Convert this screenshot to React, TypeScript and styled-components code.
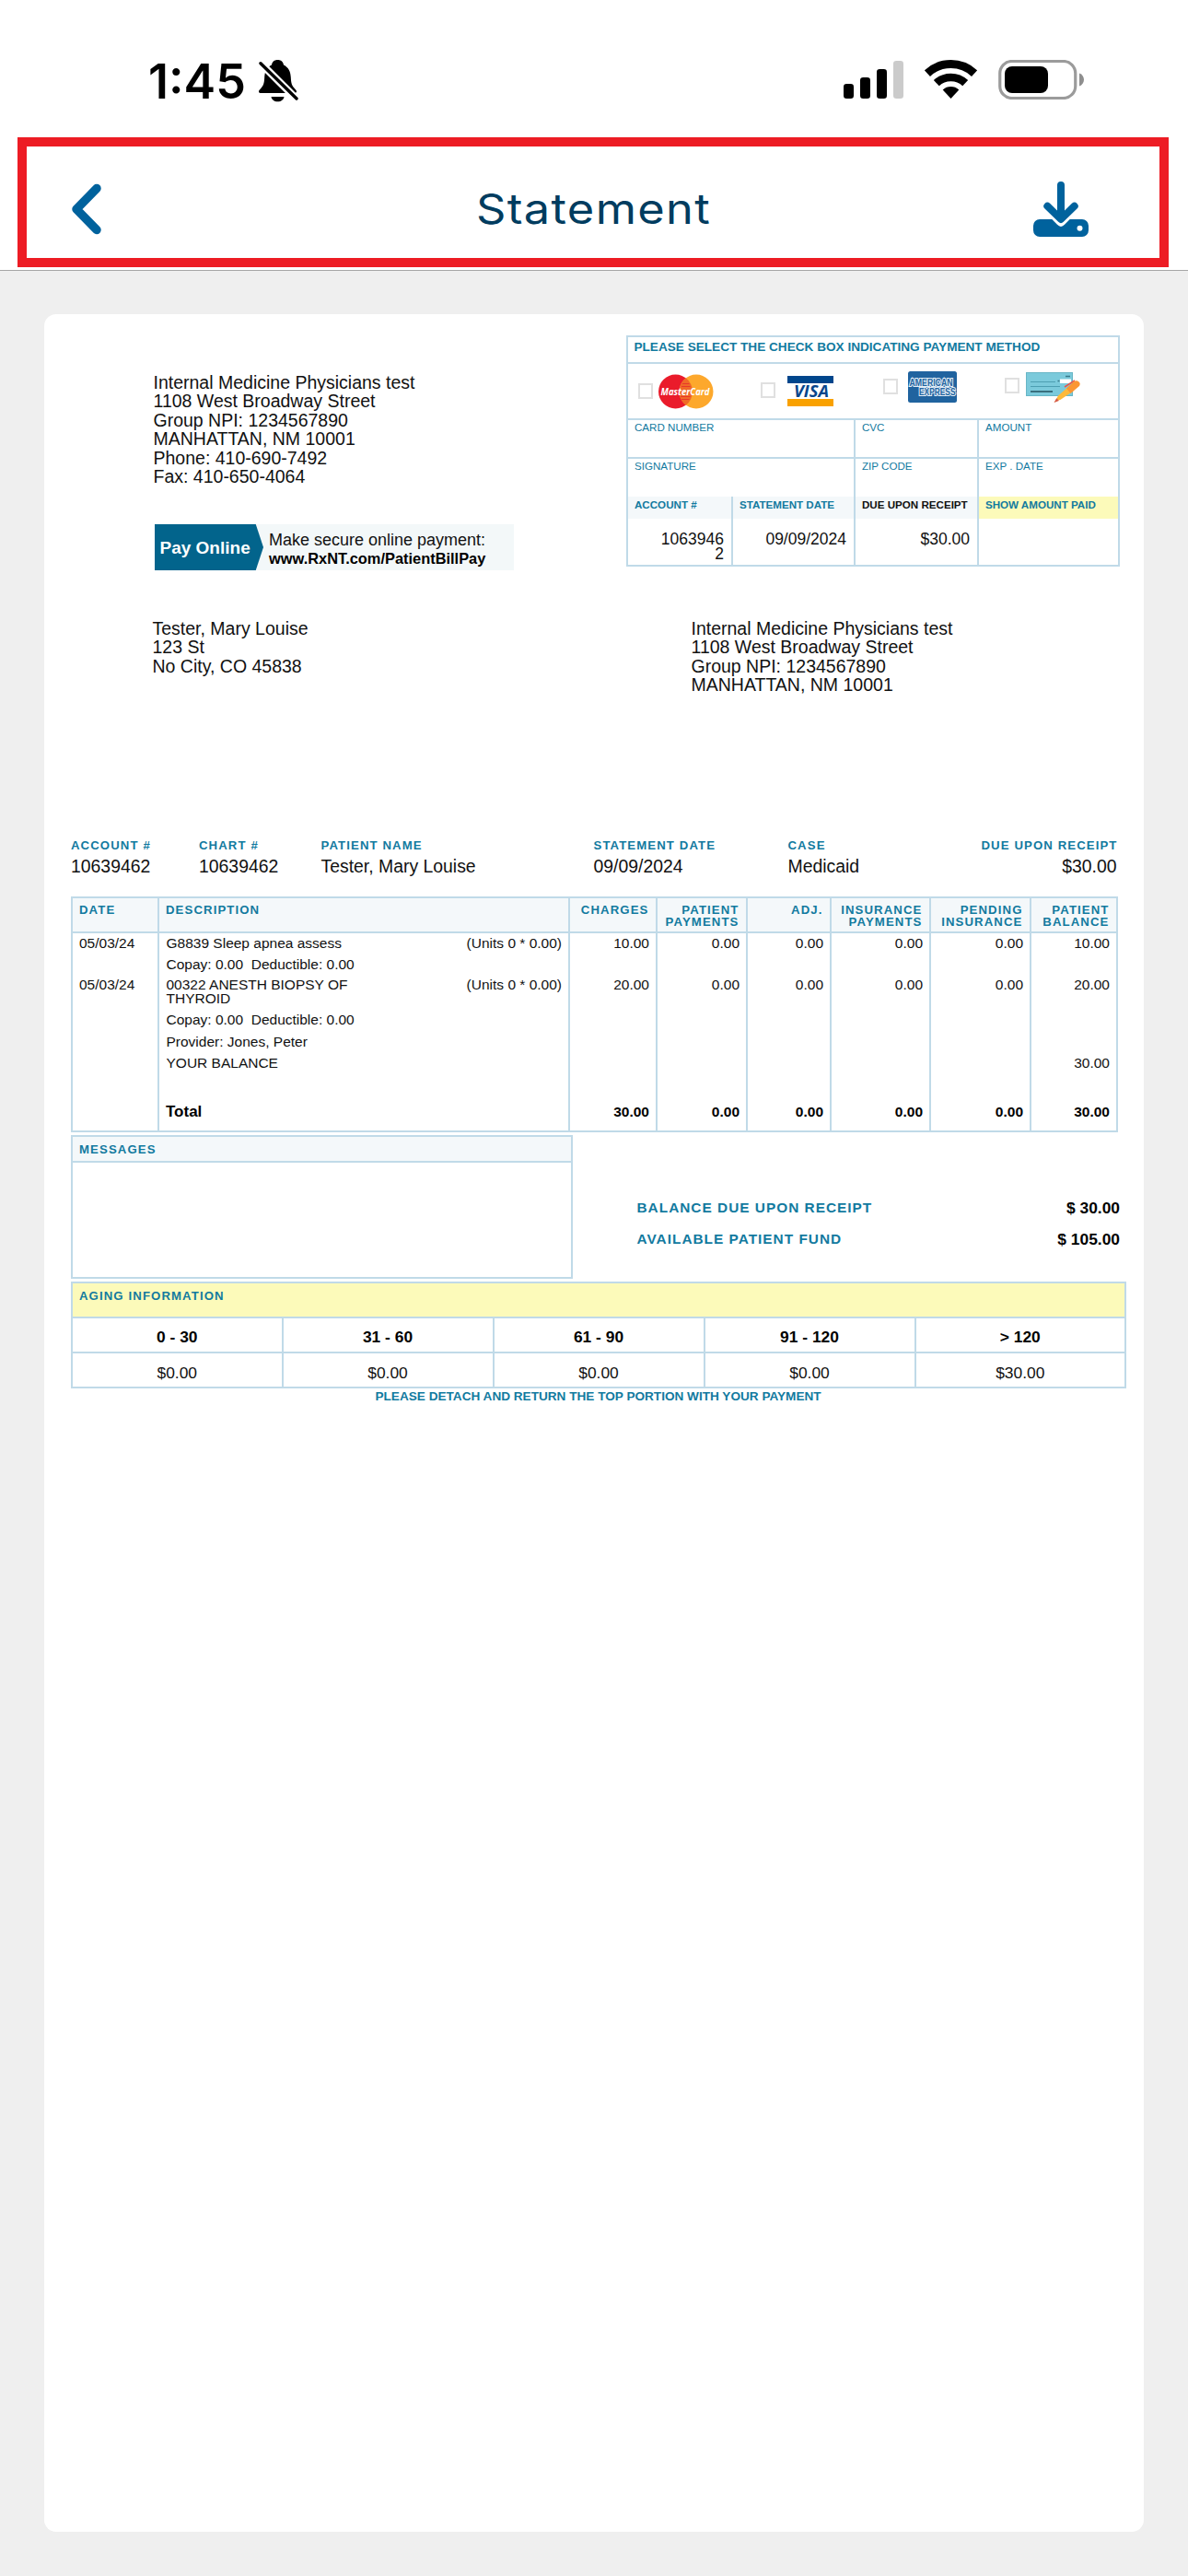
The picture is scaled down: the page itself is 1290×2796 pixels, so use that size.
import React from "react";
import styled, { createGlobalStyle, css } from "styled-components";

const LINE = "#c0dae8";
const TEAL = "#127a9f";
const TINT = "#f4f8fa";
const YELLOW = "#fcfaba";
const BRAND = "#00629d";

const GlobalStyle = createGlobalStyle`
  * { box-sizing: border-box; }
  body {
    margin: 0;
    background: #efefef;
    font-family: "Liberation Sans", Arial, sans-serif;
    color: #111;
  }
`;

const Screen = styled.div`
  width: 1290px;
  height: 2796px;
  display: flex;
  flex-direction: column;
  background: #efefef;
  overflow: hidden;
`;

/* ---------- status bar & navigation ---------- */

const TopArea = styled.header`
  height: 294px;
  background: #fff;
  border-bottom: 1px solid #a6a6a6;
  flex: none;
`;

const StatusBar = styled.div`
  height: 149px;
  padding: 65px 112px 0 161px;
  display: flex;
  justify-content: space-between;
  align-items: flex-start;
`;

const Clock = styled.div`
  display: flex;
  gap: 13px;
  height: 46px;
`;

const Time = styled.span`
  width: 107px;
  font: 600 52px/46px Inter, sans-serif;
  letter-spacing: 0;
  transform: translateY(1px);
  color: #000;
  white-space: nowrap;
`;

const StatusIcons = styled.div`
  display: flex;
  gap: 23px;
  & > svg { display: block; }
`;

const NavBar = styled.nav`
  height: 141px;
  margin: 0 21px 0 19px;
  border: 10px solid #ed1c24;
  padding: 0 77px 0 47px;
  display: grid;
  grid-template-columns: 60px 1fr 60px;
  align-items: center;
`;

const NavButton = styled.button`
  border: 0;
  padding: 0;
  background: none;
  color: ${BRAND};
  height: 60px;
  display: flex;
  align-items: center;
  margin-top: 14px;
`;

const Title = styled.h1`
  margin: 15px 0 0 31px;
  text-align: center;
  font: 400 45.5px/60px Inter, sans-serif;
  letter-spacing: 1.2px;
  transform: scaleX(1.11);
  color: #003c5f;
  white-space: nowrap;
`;

/* ---------- paper ---------- */

const Paper = styled.main`
  width: 1194px;
  height: 2407px;
  margin: 47px 48px 0;
  border-radius: 13px;
  background: #fff;
`;

const Upper = styled.section`
  height: 331px;
  display: grid;
  grid-template-columns: 632px 536px;
`;

const Issuer = styled.div`
  padding: 64px 0 0 118.5px;
`;

const Address = styled.div`
  font-size: 19.5px;
  line-height: 20.4px;
  white-space: nowrap;
`;

const PayBanner = styled.div`
  width: 390px;
  height: 50px;
  margin: 41.6px 0 0 1.5px;
  background: #f3f8f9;
  display: flex;
`;

const PayTag = styled.div`
  width: 118px;
  padding: 1px 0 0 5.5px;
  background: #02648c;
  clip-path: polygon(0 0, 93% 0, 100% 50%, 93% 100%, 0 100%);
  color: #fff;
  font-weight: 700;
  font-size: 19px;
  line-height: 50px;
  white-space: nowrap;
`;

const PayText = styled.div`
  padding: 7px 0 0 6px;
  font-size: 18px;
  line-height: 20px;
  white-space: nowrap;
  & > strong { display: block; font-size: 16.4px; color: #000; }
`;

const Slip = styled.div`
  width: 536px;
  height: 251px;
  margin-top: 23px;
  border: 2px solid ${LINE};
`;

const SlipTitle = styled.div`
  height: 29px;
  padding: 3px 0 0 6.5px;
  border-bottom: 2px solid ${LINE};
  font-weight: 700;
  font-size: 13.6px;
  line-height: 16px;
  color: ${TEAL};
  white-space: nowrap;
`;

const Methods = styled.div`
  height: 61px;
  border-bottom: 2px solid ${LINE};
  display: grid;
  grid-template-columns: 132.5px 133.5px 132.5px 1fr;
`;

const Method = styled.label<{ $left: number; $top: number; $gap: number }>`
  display: flex;
  align-items: flex-start;
  gap: ${(p) => p.$gap}px;
  padding: ${(p) => p.$top}px 0 0 ${(p) => p.$left}px;
`;

const Box = styled.span<{ $drop: number }>`
  width: 16px;
  height: 17px;
  margin-top: ${(p) => p.$drop}px;
  border: 2px solid #e0e0e0;
  background: #fff;
  flex: none;
`;

const Art = styled.span<{ $drop?: number }>`
  margin-top: ${(p) => p.$drop ?? 0}px;
  & > svg { display: block; overflow: visible; }
`;

const SlipRow = styled.div<{ $h: number; $four?: boolean; $line?: boolean }>`
  height: ${(p) => p.$h}px;
  display: grid;
  grid-template-columns: ${(p) => (p.$four ? "112px 133px 134px 1fr" : "245px 134px 1fr")};
  ${(p) => p.$line && css`border-bottom: 2px solid ${LINE};`}
  & > * + * { border-left: 2px solid ${LINE}; }
`;

const SlipLabel = styled.div<{ $bold?: boolean; $bg?: string; $dark?: boolean }>`
  padding: 1px 0 0 7px;
  font-size: 11.6px;
  line-height: ${(p) => (p.$bold ? 15 : 14)}px;
  font-weight: ${(p) => (p.$bold ? 700 : 400)};
  color: ${(p) => (p.$dark ? "#111" : TEAL)};
  background: ${(p) => p.$bg ?? "transparent"};
  white-space: nowrap;
`;

const SlipValue = styled.div`
  padding: 15px 8px 0 0;
  text-align: right;
  font-size: 17.5px;
  line-height: 15.7px;
`;

const Recipients = styled.section`
  height: 238px;
  padding-left: 117.5px;
  display: grid;
  grid-template-columns: 585px 1fr;
`;

/* ---------- summary ---------- */

const tealCaps = css`
  font-weight: 700;
  font-size: 13.2px;
  letter-spacing: 1.1px;
  color: ${TEAL};
  white-space: nowrap;
`;

const Summary = styled.section`
  height: 63px;
  margin-left: 29px;
  display: grid;
  grid-template-columns: 139px 132.5px 296px 211px 357px;
  grid-auto-flow: column;
`;

const SummaryTail = styled.div`
  display: flex;
  justify-content: space-between;
`;

const Fact = styled.div<{ $end?: boolean }>`
  text-align: ${(p) => (p.$end ? "right" : "left")};
  & > b { display: block; ${tealCaps} line-height: 16px; margin-right: -1px; }
  & > span { display: block; font-size: 19.4px; line-height: 24px; margin-top: 2px; white-space: nowrap; }
`;

/* ---------- ledger ---------- */

const Ledger = styled.section`
  width: 1137px;
  height: 256px;
  margin-left: 29px;
  border: 2px solid ${LINE};
  display: flex;
  flex-direction: column;
`;

const LedgerRow = styled.div<{ $h?: number; $head?: boolean }>`
  ${(p) => (p.$h ? css`height: ${p.$h}px;` : css`flex: 1;`)}
  display: grid;
  grid-template-columns: 94px 446px 95px 98px 91px 108px 109px 1fr;
  ${(p) => p.$head && css`background: ${TINT}; border-bottom: 2px solid ${LINE};`}
  & > *:not(:last-child) { border-right: 2px solid ${LINE}; }
`;

const HeadCell = styled.div<{ $end?: boolean }>`
  padding: 6px ${(p) => (p.$end ? 7.5 : 0)}px 0 7px;
  ${tealCaps}
  line-height: 13px;
  ${(p) => p.$end && css`display: flex; flex-direction: column; align-items: flex-end;`}
`;

const Cell = styled.div<{ $end?: boolean; $total?: boolean }>`
  padding: ${(p) => (p.$total ? 31 : 4)}px 7px 0;
  font-size: 15.5px;
  line-height: 14.4px;
  text-align: ${(p) => (p.$end ? "right" : "left")};
  ${(p) => p.$total && css`font-weight: 700; line-height: 20px; color: #000;`}
`;

const Service = styled(Cell)`
  display: flex;
  justify-content: space-between;
  padding-left: 7.5px;
  & > span { white-space: nowrap; }
  & > span:first-child { width: 220px; white-space: normal; }
`;

const TotalLabel = styled.span`
  font-size: 17px;
`;

/* ---------- messages and balance ---------- */

const Middle = styled.section`
  height: 156px;
  margin: 3px 0 0 29px;
  display: grid;
  grid-template-columns: 544.5px 1fr;
`;

const Messages = styled.div`
  border: 2px solid ${LINE};
`;

const MessagesHead = styled.div`
  height: 28px;
  padding: 7px 0 0 7px;
  border-bottom: 2px solid ${LINE};
  background: ${TINT};
  ${tealCaps}
  line-height: 13px;
`;

const Balances = styled.div`
  padding: 69px 26px 0 70px;
`;

const BalanceRow = styled.div`
  height: 34px;
  display: flex;
  justify-content: space-between;
  line-height: 20px;
  & > span { ${tealCaps} font-size: 15.4px; letter-spacing: 1px; }
  & > b { font-size: 17.4px; line-height: 21px; color: #000; }
`;

/* ---------- aging ---------- */

const Aging = styled.section`
  width: 1146px;
  height: 116px;
  margin: 3px 0 0 29px;
  border: 2px solid ${LINE};
`;

const AgingHead = styled.div`
  height: 38px;
  padding: 7px 0 0 7px;
  background: ${YELLOW};
  border-bottom: 2px solid ${LINE};
  ${tealCaps}
  line-height: 14px;
`;

const AgingRow = styled.div<{ $head?: boolean }>`
  height: ${(p) => (p.$head ? 38 : 36)}px;
  display: grid;
  grid-template-columns: 226.5px 229px 229px 229px 1fr;
  grid-template-rows: 36px;
  text-align: center;
  font-size: 17.4px;
  line-height: ${(p) => (p.$head ? 41 : 43)}px;
  ${(p) => p.$head && css`font-weight: 700; border-bottom: 2px solid ${LINE}; color: #000;`}
  & > * + * { border-left: 2px solid ${LINE}; }
`;

const Footnote = styled.p`
  margin: 0 0 0 359.5px;
  font-weight: 700;
  font-size: 13.6px;
  line-height: 18px;
  color: ${TEAL};
  white-space: nowrap;
`;

/* ---------- drawings ---------- */

const BellOff = () => (
  <svg width="43" height="46" viewBox="0 0 43 46">
    <path
      d="M20.5 0c-3.8 0-6 2.2-6.5 5.4C8.600 8 6.400 13 6.200 19c-.2 6-1.200 8.800-3.400 11.200C.8 32.400 0 33 0 34.200 0 35.500 1 36 2.500 36h36c1.500 0 2.500-.6 2.500-1.800 0-1.200-.8-1.800-2.800-4-2.200-2.400-3.200-5.200-3.400-11.200-.2-6-2.400-11-7.800-13.600C26.500 2.200 24.300 0 20.500 0z"
      fill="#000"
    />
    <path d="M13.500 40h14c-.5 3.200-3.200 5.300-7 5.300s-6.500-2.100-7-5.300z" fill="#000" />
    <path d="M1 2.500L41.500 43" stroke="#fff" strokeWidth="8" />
    <path d="M2 3.800L41 42" stroke="#000" strokeWidth="3.400" strokeLinecap="round" />
  </svg>
);

const Signal = () => (
  <svg width="65" height="43" viewBox="0 0 65 43">
    <rect x="0" y="26" width="11" height="16" rx="3.300" />
    <rect x="18" y="19" width="11" height="23" rx="3.300" />
    <rect x="36" y="10" width="11" height="32" rx="3.300" />
    <rect x="54" y="1" width="11" height="41" rx="3.300" fill="#cbcbcb" />
  </svg>
);

const Wifi = () => (
  <svg width="57" height="43" viewBox="0 0 57 43">
    <g fill="none" stroke="#000">
      <path d="M2.900 14.600a37.500 37.500 0 0 1 51.200 0" strokeWidth="9" />
      <path d="M12.800 25.200a23 23 0 0 1 31.400 0" strokeWidth="8.600" />
    </g>
    <path d="M28.500 42l-8.800-9.600a13 13 0 0 1 17.600 0z" />
  </svg>
);

const Battery = () => (
  <svg width="94" height="43" viewBox="0 0 94 43">
    <rect x="1.750" y="1.500" width="82" height="40" rx="13" fill="none" stroke="#9b9b9b" strokeWidth="3.200" />
    <rect x="7" y="7" width="47" height="29" rx="8" />
    <path d="M88 14.500c3 1 5 3.700 5 7s-2 6-5 7z" fill="#8e8e8e" />
  </svg>
);

const BackIcon = () => (
  <svg width="34" height="56" viewBox="0 0 34 56">
    <path d="M29 5.500L7 28l22 22.500" fill="none" stroke="currentColor" strokeWidth="9.500" strokeLinecap="round" strokeLinejoin="round" />
  </svg>
);

const DownloadIcon = () => (
  <svg width="60" height="60" viewBox="0 0 60 60">
    <path d="M30 4v36M15.300 26.700L30 41l14.700-14.300" fill="none" stroke="currentColor" strokeWidth="8" strokeLinecap="round" strokeLinejoin="round" />
    <path
      fillRule="evenodd"
      d="M7 41h13.300l5.700 5.800q4 4.200 8 0l5.700-5.800H53a7 7 0 0 1 7 7v5a7 7 0 0 1-7 7H7a7 7 0 0 1-7-7v-5a7 7 0 0 1 7-7zM50.500 47.700a3 3 0 1 0 0 6 3 3 0 0 0 0-6z"
      fill="currentColor"
    />
  </svg>
);

const MasterCard = () => (
  <svg width="60" height="38" viewBox="0 0 60 38">
    <circle cx="18.500" cy="19" r="18.500" fill="#ea1b2b" />
    <circle cx="41" cy="19" r="18.500" fill="#fda82c" />
    <path d="M29.750 4.300a18.500 18.500 0 0 1 0 29.400 18.500 18.500 0 0 1 0-29.400z" fill="#f06a27" />
    <path d="M26 10.500h7.500M25 13.500h9.500M24 24.500h10.500M25 27.500h8.500" stroke="#e8382a" strokeWidth="1.200" />
    <text x="2.500" y="22.800" fontSize="11" fontWeight="700" fontStyle="italic" fontFamily="Open Sans, sans-serif" fill="#fff" textLength="53" lengthAdjust="spacingAndGlyphs">
      MasterCard
    </text>
  </svg>
);

const Visa = () => (
  <svg width="50" height="33" viewBox="0 0 50 33">
    <rect width="50" height="8" fill="#00468c" />
    <rect y="25" width="50" height="8" fill="#f9a100" />
    <text x="7" y="23.300" fontSize="18.500" fontWeight="700" fontStyle="italic" fontFamily="Open Sans, sans-serif" fill="#07468c" textLength="38" lengthAdjust="spacingAndGlyphs">
      VISA
    </text>
  </svg>
);

const Amex = () => (
  <svg width="53" height="34" viewBox="0 0 53 34">
    <rect width="53" height="34" rx="2.500" fill="#20639f" />
    <g fontFamily="Liberation Sans, sans-serif" fontWeight="700" fontSize="10" fill="#20639f" stroke="#e4eef7" strokeWidth="2.200" paintOrder="stroke">
      <text x="1.500" y="15.500" textLength="47" lengthAdjust="spacingAndGlyphs">AMERICAN</text>
      <text x="12" y="26.300" textLength="39.500" lengthAdjust="spacingAndGlyphs">EXPRESS</text>
    </g>
  </svg>
);

const Check = () => (
  <svg width="60" height="34" viewBox="0 0 60 34">
    <rect x="0.500" y="0.500" width="50" height="25" fill="#7bcadb" stroke="#68b6c6" />
    <path d="M5 10.500h27M5 15.500h32" stroke="#4d9fb2" strokeWidth="1.200" />
    <path d="M5 21h24" stroke="#2d5f6c" strokeWidth="1.700" />
    <rect x="37" y="7.500" width="12" height="4.500" fill="#fff" />
    <path d="M34.500 9.500h2M43 4.500h5" stroke="#37798a" strokeWidth="1.400" />
    <path d="M42 16l11-7" stroke="#e8574a" strokeWidth="1.500" />
    <path d="M35 25.500l12-10.500 4.500 5.500L38 29.500l-7 3z" fill="#fdb93a" />
    <path d="M44 17.500l8.500-7.700c3-1.800 8 1.200 5.500 5.200L48.500 23z" fill="#fb9633" />
    <path d="M30.500 33l2.800-4.800 2.500 2.800z" fill="#d65b4a" />
  </svg>
);

/* ---------- data ---------- */

const methods = [
  { name: "MasterCard", art: <MasterCard />, left: 10.500, top: 10.500, gap: 6, boxDrop: 10, artDrop: 0 },
  { name: "Visa", art: <Visa />, left: 11, top: 10, gap: 13, boxDrop: 10, artDrop: 2.500 },
  { name: "American Express", art: <Amex />, left: 11, top: 8, gap: 10.500, boxDrop: 8, artDrop: 0 },
  { name: "Check", art: <Check />, left: 10.500, top: 9, gap: 6.500, boxDrop: 6, artDrop: 0 },
];

const facts = [
  ["ACCOUNT #", "10639462"],
  ["CHART #", "10639462"],
  ["PATIENT NAME", "Tester, Mary Louise"],
  ["STATEMENT DATE", "09/09/2024"],
];

const amountHeads = [["CHARGES"], ["PATIENT", "PAYMENTS"], ["ADJ."], ["INSURANCE", "PAYMENTS"], ["PENDING", "INSURANCE"], ["PATIENT", "BALANCE"]];

const none = ["", "", "", "", "", ""];
const entries = [
  { h: 22.500, date: "05/03/24", text: "G8839 Sleep apnea assess", units: "(Units 0 * 0.00)", sums: ["10.00", "0.00", "0.00", "0.00", "0.00", "10.00"] },
  { h: 22.800, date: "", text: "Copay: 0.00\u00a0 Deductible: 0.00", units: "", sums: none },
  { h: 38, date: "05/03/24", text: "00322 ANESTH BIOPSY OF THYROID", units: "(Units 0 * 0.00)", sums: ["20.00", "0.00", "0.00", "0.00", "0.00", "20.00"] },
  { h: 23.400, date: "", text: "Copay: 0.00\u00a0 Deductible: 0.00", units: "", sums: none },
  { h: 23, date: "", text: "Provider: Jones, Peter", units: "", sums: none },
  { h: 23.300, date: "", text: "YOUR BALANCE", units: "", sums: ["", "", "", "", "", "30.00"] },
];
const totals = ["30.00", "0.00", "0.00", "0.00", "0.00", "30.00"];

const aging = [
  ["0 - 30", "$0.00"],
  ["31 - 60", "$0.00"],
  ["61 - 90", "$0.00"],
  ["91 - 120", "$0.00"],
  ["> 120", "$30.00"],
];

const clinic = ["Internal Medicine Physicians test", "1108 West Broadway Street", "Group NPI: 1234567890", "MANHATTAN, NM 10001"];

const Lines = ({ lines }: { lines: string[] }) => (
  <Address>
    {lines.map((line) => (
      <div key={line}>{line}</div>
    ))}
  </Address>
);

export default function App() {
  return (
    <Screen>
      <GlobalStyle />
      <TopArea>
        <StatusBar>
          <Clock>
            <Time>1:45</Time>
            <BellOff />
          </Clock>
          <StatusIcons>
            <Signal />
            <Wifi />
            <Battery />
          </StatusIcons>
        </StatusBar>
        <NavBar>
          <NavButton aria-label="Back">
            <BackIcon />
          </NavButton>
          <Title>Statement</Title>
          <NavButton aria-label="Download">
            <DownloadIcon />
          </NavButton>
        </NavBar>
      </TopArea>

      <Paper>
        <Upper>
          <Issuer>
            <Lines lines={[...clinic, "Phone: 410-690-7492", "Fax: 410-650-4064"]} />
            <PayBanner>
              <PayTag>Pay Online</PayTag>
              <PayText>
                Make secure online payment:
                <strong>www.RxNT.com/PatientBillPay</strong>
              </PayText>
            </PayBanner>
          </Issuer>
          <Slip>
            <SlipTitle>PLEASE SELECT THE CHECK BOX INDICATING PAYMENT METHOD</SlipTitle>
            <Methods>
              {methods.map((m) => (
                <Method key={m.name} $left={m.left} $top={m.top} $gap={m.gap} aria-label={m.name}>
                  <Box $drop={m.boxDrop} />
                  <Art $drop={m.artDrop}>{m.art}</Art>
                </Method>
              ))}
            </Methods>
            <SlipRow $h={42} $line>
              <SlipLabel>CARD NUMBER</SlipLabel>
              <SlipLabel>CVC</SlipLabel>
              <SlipLabel>AMOUNT</SlipLabel>
            </SlipRow>
            <SlipRow $h={41}>
              <SlipLabel>SIGNATURE</SlipLabel>
              <SlipLabel>ZIP CODE</SlipLabel>
              <SlipLabel>EXP . DATE</SlipLabel>
            </SlipRow>
            <SlipRow $h={24} $four>
              <SlipLabel $bold $bg={TINT}>ACCOUNT #</SlipLabel>
              <SlipLabel $bold $bg={TINT}>STATEMENT DATE</SlipLabel>
              <SlipLabel $bold $dark $bg={TINT}>DUE UPON RECEIPT</SlipLabel>
              <SlipLabel $bold $bg={YELLOW}>SHOW AMOUNT PAID</SlipLabel>
            </SlipRow>
            <SlipRow $h={50} $four>
              <SlipValue>1063946<br />2</SlipValue>
              <SlipValue>09/09/2024</SlipValue>
              <SlipValue>$30.00</SlipValue>
              <SlipValue />
            </SlipRow>
          </Slip>
        </Upper>

        <Recipients>
          <Lines lines={["Tester, Mary Louise", "123 St", "No City, CO 45838"]} />
          <Lines lines={clinic} />
        </Recipients>

        <Summary>
          {facts.map(([label, value]) => (
            <Fact key={label}>
              <b>{label}</b>
              <span>{value}</span>
            </Fact>
          ))}
          <SummaryTail>
            <Fact>
              <b>CASE</b>
              <span>Medicaid</span>
            </Fact>
            <Fact $end>
              <b>DUE UPON RECEIPT</b>
              <span>$30.00</span>
            </Fact>
          </SummaryTail>
        </Summary>

        <Ledger>
          <LedgerRow $h={38} $head>
            <HeadCell>DATE</HeadCell>
            <HeadCell>DESCRIPTION</HeadCell>
            {amountHeads.map((words, i) => (
              <HeadCell key={i} $end>
                {words.map((w) => (
                  <span key={w}>{w}</span>
                ))}
              </HeadCell>
            ))}
          </LedgerRow>
          {entries.map((e, i) => (
            <LedgerRow key={i} $h={e.h}>
              <Cell>{e.date}</Cell>
              <Service>
                <span>{e.text}</span>
                <span>{e.units}</span>
              </Service>
              {e.sums.map((s, j) => (
                <Cell key={j} $end>{s}</Cell>
              ))}
            </LedgerRow>
          ))}
          <LedgerRow>
            <Cell />
            <Cell $total>
              <TotalLabel>Total</TotalLabel>
            </Cell>
            {totals.map((t, i) => (
              <Cell key={i} $end $total>{t}</Cell>
            ))}
          </LedgerRow>
        </Ledger>

        <Middle>
          <Messages>
            <MessagesHead>MESSAGES</MessagesHead>
          </Messages>
          <Balances>
            <BalanceRow>
              <span>BALANCE DUE UPON RECEIPT</span>
              <b>$ 30.00</b>
            </BalanceRow>
            <BalanceRow>
              <span>AVAILABLE PATIENT FUND</span>
              <b>$ 105.00</b>
            </BalanceRow>
          </Balances>
        </Middle>

        <Aging>
          <AgingHead>AGING INFORMATION</AgingHead>
          <AgingRow $head>
            {aging.map(([range]) => (
              <div key={range}>{range}</div>
            ))}
          </AgingRow>
          <AgingRow>
            {aging.map(([range, sum]) => (
              <div key={range}>{sum}</div>
            ))}
          </AgingRow>
        </Aging>
        <Footnote>PLEASE DETACH AND RETURN THE TOP PORTION WITH YOUR PAYMENT</Footnote>
      </Paper>
    </Screen>
  );
}
